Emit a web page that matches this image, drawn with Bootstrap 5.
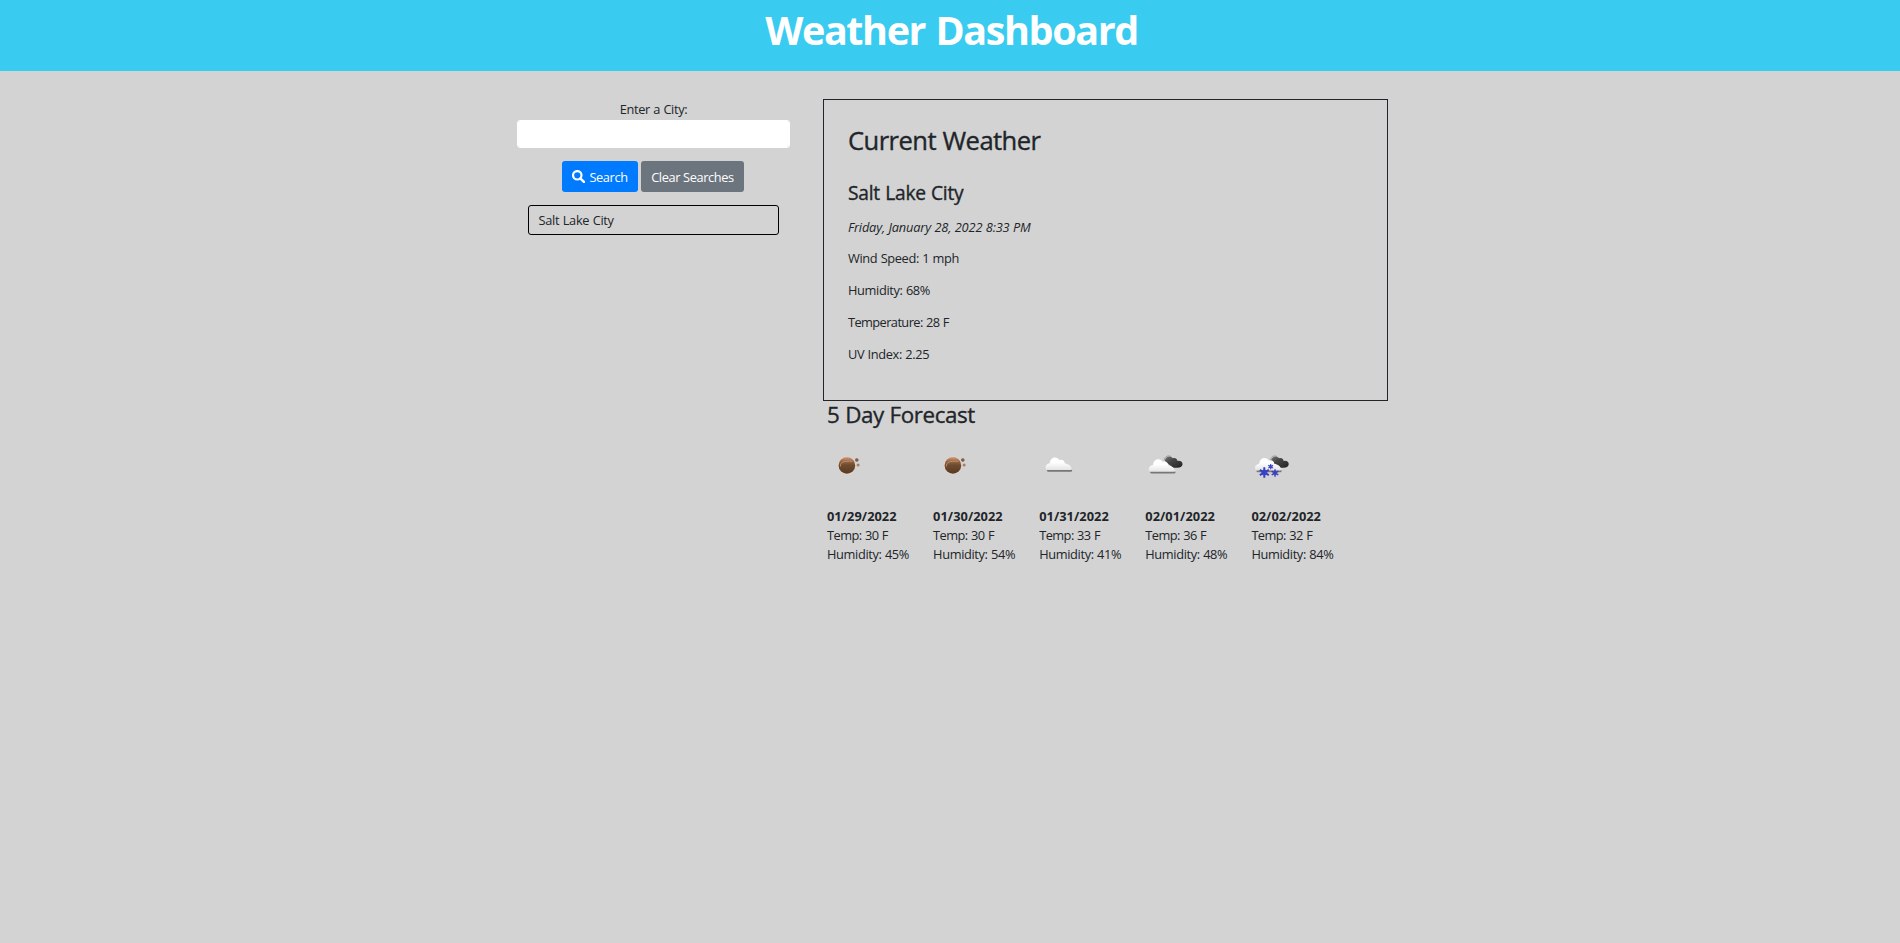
<!DOCTYPE html>
<html lang="en">
<head>
<meta charset="utf-8">
<meta name="viewport" content="width=device-width, initial-scale=1">
<title>Weather Dashboard</title>
<link rel="stylesheet" href="https://cdn.jsdelivr.net/npm/bootstrap@5.3.0/dist/css/bootstrap.min.css">
<style>
  body { background: #d3d3d3; color: #212529; font-family: "Open Sans", "Noto Sans", sans-serif; font-size: 12.8px; line-height: 19.2px; letter-spacing: -.36px; word-spacing: .4px; }
  .page-header { background: #3acbf1; height: 71px; }
  .page-header h1 { font-size: 39.5px; font-weight: 700; line-height: 48px; padding: 6px 0 0 3px; letter-spacing: -1.4px; word-spacing: 1.5px; }
  .dashboard { width: 912px; padding-top: 28px; }
  .search-col { width: 273px; margin-left: 23px; padding-top: 1px; }
  .city-field { height: 28px; border: 1px solid #fff; border-radius: 3px; padding: 4px 10px; font-size: 12.8px; margin-top: 1px; }
  .buttons { gap: 3px; margin: 13px 2px 13px 0; }
  .btn { font-size: 12.8px; line-height: 19.2px; padding: 1px 0 0 1px; height: 31px; border-radius: 3px; border: 0; white-space: nowrap; letter-spacing: -.38px; }
  .btn-find, .btn-find:hover { background: #007bff; color: #fff; width: 76px; }
  .btn-clear, .btn-clear:hover { background: #6c757d; color: #fff; width: 103px; }
  .btn-find svg { width: 13px; height: 13px; margin: -1px 4px 0 0; }
  .history-item { width: 251px; height: 30px; border: 1px solid #000; border-radius: 3px; padding: 5px 9.6px; letter-spacing: -.3px; }
  .weather-col { width: 565px; margin-left: 33px; }
  .current { height: 302px; border: 1px solid #212529; padding: 25px 24px; }
  .current h2, .current h3, .forecast h2 { -webkit-text-stroke: .35px #212529; }
  .current h2 { font-size: 25.6px; font-weight: 500; line-height: 31px; margin-bottom: 25px; letter-spacing: -.56px; }
  .current h3 { font-size: 19.2px; font-weight: 500; line-height: 23px; margin-bottom: 14px; letter-spacing: -.22px; }
  .current p { margin-bottom: 12.8px; }
  .current .stamp { letter-spacing: -.17px; margin-bottom: 11.8px; }
  .current .tight { letter-spacing: -.58px; word-spacing: .6px; }
  .forecast { padding-left: 4px; }
  .forecast h2 { font-size: 22.4px; font-weight: 500; line-height: 28px; margin-bottom: 16px; letter-spacing: -.42px; }
  .day { width: 106.1px; }
  .day svg { width: 40px; height: 40px; margin-bottom: 22px; }
  .day strong { letter-spacing: .05px; }
  .day .temp { letter-spacing: -.55px; word-spacing: .6px; }
</style>
</head>
<body>
<svg width="0" height="0" class="position-absolute" aria-hidden="true">
  <defs>
    <linearGradient id="moonFill" x1="0" y1="0" x2="0" y2="1"><stop offset="0" stop-color="#d0a080"/><stop offset=".25" stop-color="#956542"/><stop offset=".5" stop-color="#6e4a2f"/><stop offset="1" stop-color="#573a26"/></linearGradient>
    <linearGradient id="cloudFill" x1="0" y1="0" x2="0" y2="1"><stop offset=".4" stop-color="#fff"/><stop offset="1" stop-color="#e4e4e4"/></linearGradient>
    <linearGradient id="darkFill" x1="0" y1="0" x2="1" y2="1"><stop offset="0" stop-color="#777"/><stop offset=".4" stop-color="#444"/><stop offset="1" stop-color="#222"/></linearGradient>
    <filter id="soft" x="-20%" y="-20%" width="140%" height="140%"><feGaussianBlur stdDeviation=".4"/></filter>
    <symbol id="moon" viewBox="0 0 40 40"><g filter="url(#soft)"><circle cx="19.900" cy="20.400" r="8.900" fill="#ead3c4"/><circle cx="19.900" cy="20.400" r="8.300" fill="url(#moonFill)"/><path d="M13.400 21.500c0-4.400 3-5.800 12-5.200" fill="none" stroke="#c99a79" stroke-width=".8"/><circle cx="29.800" cy="15" r="1.800" fill="#7d5a47"/><circle cx="31.100" cy="20" r="1.500" fill="#a77d65"/></g></symbol>
    <symbol id="cloud" viewBox="0 0 40 40"><g filter="url(#soft)"><path d="M8.500 25.500h22.500" stroke="#777" stroke-width="2.600" stroke-linecap="round"/><path d="M7.400 24.900c-2.400-.9-3-5.500 2.600-6.700.2-6.500 7.600-7.300 9.500-3.200 3.400-.8 5.200.8 5.600 3.600 3.400 0 6 2.300 7 5.200.2.800-.4 1.100-1 1.100z" fill="url(#cloudFill)"/></g></symbol>
    <symbol id="darkCloud" viewBox="0 0 40 40"><g filter="url(#soft)"><path d="M19 16c.2-4.600 5.700-6.200 8-2.700 2.500-.8 4.200.6 4.700 2.600 3.200-.4 5.400 1.300 5 3.600-.4 2.400-2.800 3.400-5 3.300h-4.500z" fill="url(#darkFill)"/><path d="M18.300 15.500c.7-4.700 4.600-5.300 6.800-4" fill="none" stroke="#999" stroke-width=".9"/></g></symbol>
    <symbol id="flake" viewBox="-5 -5 10 10"><path d="M0-4.700V4.700M-4.100-2.400 4.100 2.400M-4.100 2.400 4.100-2.400" stroke="#3940c4" stroke-width="1.800"/><circle r="2.300" fill="none" stroke="#3940c4" stroke-width=".9"/></symbol>
  </defs>
</svg>
<header class="page-header text-center text-white"><h1 class="mb-0">Weather Dashboard</h1></header>
<main class="dashboard mx-auto d-flex align-items-start">
  <section class="search-col d-flex flex-column align-items-center">
    <label for="city">Enter a City:</label>
    <input id="city" class="form-control city-field" type="text">
    <div class="buttons d-flex">
      <button class="btn btn-find d-flex align-items-center justify-content-center" type="button"><svg viewBox="0 0 16 16" aria-hidden="true"><circle cx="6.500" cy="6.500" r="5.200" fill="none" stroke="#fff" stroke-width="2.700"/><path d="m10.500 10.500 4.200 4.200" stroke="#fff" stroke-width="3.100" stroke-linecap="round"/></svg>Search</button>
      <button class="btn btn-clear" type="button">Clear Searches</button>
    </div>
    <div class="history-item">Salt Lake City</div>
  </section>
  <section class="weather-col">
    <div class="current">
      <h2>Current Weather</h2>
      <h3>Salt Lake City</h3>
      <p class="stamp"><em>Friday, January 28, 2022 8:33 PM</em></p>
      <p>Wind Speed: 1 mph</p>
      <p>Humidity: 68%</p>
      <p class="tight">Temperature: 28 F</p>
      <p>UV Index: 2.25</p>
    </div>
    <div class="forecast">
      <h2>5 Day Forecast</h2>
      <div class="d-flex">
        <div class="day d-flex flex-column"><svg viewBox="0 0 40 40"><use href="#moon"/></svg><strong>01/29/2022</strong><span class="temp">Temp: 30 F</span><span>Humidity: 45%</span></div>
        <div class="day d-flex flex-column"><svg viewBox="0 0 40 40"><use href="#moon"/></svg><strong>01/30/2022</strong><span class="temp">Temp: 30 F</span><span>Humidity: 54%</span></div>
        <div class="day d-flex flex-column"><svg viewBox="0 0 40 40"><use href="#cloud" x=".8"/></svg><strong>01/31/2022</strong><span class="temp">Temp: 33 F</span><span>Humidity: 41%</span></div>
        <div class="day d-flex flex-column"><svg viewBox="0 0 40 40"><use href="#darkCloud" x=".8"/><use href="#cloud" x="-1.900" y="1.800"/></svg><strong>02/01/2022</strong><span class="temp">Temp: 36 F</span><span>Humidity: 48%</span></div>
        <div class="day d-flex flex-column"><svg viewBox="0 0 40 40"><use href="#darkCloud" x="1"/><use href="#cloud" x="-1.700" y=".5"/><use href="#flake" x="7.800" y="22" width="11" height="11"/><use href="#flake" x="16.700" y="18.700" width="6" height="6"/><use href="#flake" x="20" y="24" width="8" height="8"/></svg><strong>02/02/2022</strong><span class="temp">Temp: 32 F</span><span>Humidity: 84%</span></div>
      </div>
    </div>
  </section>
</main>
<script src="https://cdn.jsdelivr.net/npm/bootstrap@5.3.0/dist/js/bootstrap.bundle.min.js"></script>
</body>
</html>
